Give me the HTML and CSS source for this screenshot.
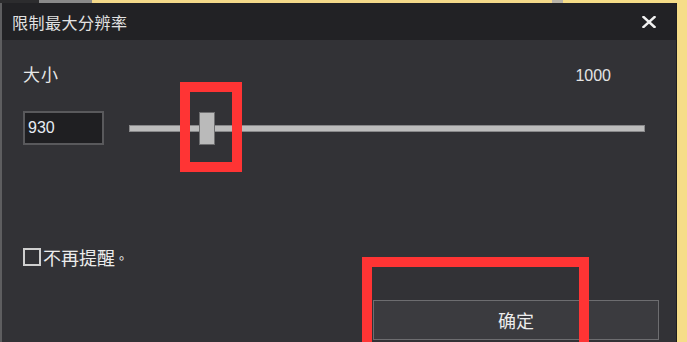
FILE: index.html
```html
<!DOCTYPE html>
<html>
<head>
    <title>限制最大分辨率</title>
    <link rel="stylesheet" href="styles.css">
</head>
<body>
    <div class="top-strip">
        <span class="strip-dark"></span>
        <span class="strip-gray"></span>
        <span class="strip-yellow"></span>
        <span class="strip-tab"></span>
    </div>

    <div class="window">
        <div class="titlebar">
            <span class="title">限制最大分辨率</span>
            <svg class="close" width="14" height="12" viewBox="0 0 14 12">
                <path d="M1.5 1 L12.5 11 M12.5 1 L1.5 11" stroke="#f2f2f2" stroke-width="2.4" stroke-linecap="square" fill="none"/>
            </svg>
        </div>

        <div class="content">
            <div class="label-row">
                <span class="size-label">大小</span>
                <span class="max-value">1000</span>
            </div>

            <div class="slider-row">
                <div class="value-box">930</div>
                <div class="track">
                    <div class="thumb"></div>
                </div>
            </div>

            <div class="check-row">
                <span class="checkbox"></span>
                <span class="check-text">不再提醒</span><span class="stop">。</span>
            </div>

            <div class="footer">
                <button class="ok-button">确定</button>
            </div>
        </div>
    </div>

    <!-- annotation boxes drawn over the screenshot -->
    <div class="mark mark-thumb"></div>
    <div class="mark mark-button"></div>
</body>
</html>
```

FILE: styles.css
```css
body
{
    margin: 0;
    width: 687px;
    height: 342px;
    overflow: hidden;
    background-color: #f6dd88;
    font-family: "Noto Sans CJK SC", "Liberation Sans", sans-serif;
    position: relative;
}

.top-strip
{
    display: flex;
    height: 3px;
}

.strip-dark
{
    width: 39px;
    background-color: #2c2c2e;
}

.strip-gray
{
    width: 53px;
    background-color: #8a8a8a;
}

.strip-yellow
{
    width: 460px;
    background-color: #f4d98a;
}

.strip-tab
{
    width: 11px;
    background-color: #b9b4a8;
}

.window
{
    width: 674px;
    height: 339px;
    border-left: 2px solid #5e5e60;
    border-right: 1px solid #1d1d1f;
    background-color: #323236;
    display: flex;
    flex-direction: column;
}

.titlebar
{
    height: 37px;
    background-color: #222225;
    display: flex;
    align-items: center;
    justify-content: space-between;
    padding: 0 20px 0 10px;
}

.title
{
    color: #e2e2e2;
    font-size: 16px;
    letter-spacing: 0.5px;
}

.close
{
    margin-top: 1px;
}

.content
{
    padding-left: 21px;
    color: #e8e8e8;
}

.label-row
{
    display: flex;
    justify-content: space-between;
    align-items: baseline;
    height: 20px;
    margin-top: 24px;
    padding-right: 65px;
}

.size-label
{
    font-size: 17px;
    line-height: 20px;
    letter-spacing: 1px;
}

.max-value
{
    font-family: "Liberation Sans", sans-serif;
    font-size: 16px;
    color: #e4e4e4;
}

.slider-row
{
    display: flex;
    align-items: center;
    margin-top: 27px;
    height: 34px;
}

.value-box
{
    width: 74px;
    height: 30px;
    border: 2px solid #59595c;
    background-color: #1f1f22;
    color: #e6ecf4;
    font-family: "Liberation Sans", sans-serif;
    font-size: 16px;
    line-height: 30px;
    padding-left: 3px;
}

.track
{
    position: relative;
    margin-left: 25px;
    width: 514px;
    height: 5px;
    background-color: #bcbcbc;
    border: 1px solid #88888a;
}

.thumb
{
    position: absolute;
    left: 69px;
    top: -14px;
    width: 14px;
    height: 31px;
    background-color: #bababa;
    border: 1px solid #6e6e70;
}

.check-row
{
    display: flex;
    align-items: center;
    margin-top: 103px;
    height: 18px;
    font-size: 18px;
    color: #ececec;
}

.checkbox
{
    width: 14px;
    height: 14px;
    border: 2px solid #cfcfcf;
    margin-right: 2px;
}

.stop
{
    font-family: "Noto Sans CJK TC", sans-serif;
    font-size: 13px;
}

.footer
{
    margin-top: 34px;
    padding-left: 350px;
}

.ok-button
{
    width: 286px;
    height: 40px;
    background-color: #3b3b3f;
    border: 1px solid #6d6d70;
    color: #ececec;
    font-family: "Noto Sans CJK SC", sans-serif;
    font-size: 18px;
    padding: 0;
    display: block;
}

.mark
{
    position: absolute;
    border: 10px solid #ff3434;
    box-sizing: border-box;
}

.mark-thumb
{
    left: 180px;
    top: 82px;
    width: 62px;
    height: 90px;
}

.mark-button
{
    left: 362px;
    top: 257px;
    width: 227px;
    height: 100px;
}
```
